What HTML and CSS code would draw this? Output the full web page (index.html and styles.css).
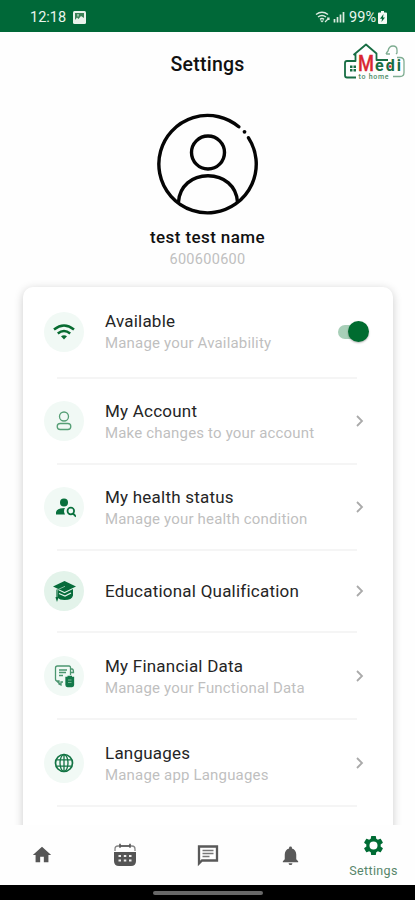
FILE: index.html
```html
<!DOCTYPE html>
<html lang="en">
<head>
<meta charset="utf-8">
<title>Settings</title>
<link rel="stylesheet" href="styles.css">
</head>
<body>
<div class="screen">
  <div class="status">
    <span class="time">12:18</span>
    <svg class="pic" width="13" height="13" viewBox="0 0 13 13"><rect width="13" height="13" rx="1.5" fill="#e9f3ec"/><path d="M2 2h9v5L8 5 5.500 8 4 6.500 2 9z" fill="#3c8258"/><path d="M5 3v2.500" stroke="#e9f3ec"/></svg>
    <svg class="signal" width="31" height="14" viewBox="0 0 31 14" fill="none" stroke="#dcebe0" stroke-width="1.500"><path d="M1 4.500Q7 0 13 4.500M3 7q4-3 8 0M5 9.300q2-1.500 4 0"/><path d="M7 12.500l-2-2h4z" fill="#dcebe0" stroke="none"/><path d="M10 12l4-4M12 8h2v2" stroke-width="1.200"/><path d="M19.500 12.500V9M22.500 12.500V7M25.500 12.500V4.500M28.500 12.500V2" stroke-width="1.700"/></svg>
    <span class="percent">99%</span>
    <svg width="9" height="13" viewBox="0 0 9 13"><path d="M3 0h3v1.500h2q1 0 1 1V12q0 1-1 1H1q-1 0-1-1V2.500q0-1 1-1h2z" fill="#f4faf5"/><path d="M5.500 3L2 7.700h2L3.500 11 7 6.400H5z" fill="#006838"/></svg>
  </div>
  <header class="header">
    <h1>Settings</h1>
    <svg class="logo" width="62" height="38" viewBox="0 0 62 38">
      <g fill="none" stroke="#176d43" stroke-width="1.800" stroke-linejoin="round">
        <path d="M12 34.500H3q-2 0-2-2V20q0-2 2-2h8.500v-8M9.500 12L22 1.500 32.500 10.500v6.500H44"/>
        <path d="M42 11q1-2 2-3 1-5 5-5 4 0 4 4v3l-1 1M42 11h4M53 14.500h3q4 0 4 4v11q0 4-4 4h-7" stroke="#7eac91" stroke-width="1.300"/>
      </g>
      <path d="M6 22.500h2.500V25H6zM9.500 22.500H12V25H9.500zM6 26h2.500v2.500H6zM9.500 26H12v2.500H9.500z" fill="#176d43"/>
      <text x="14" y="28" class="logo-m" textLength="16" lengthAdjust="spacingAndGlyphs">M</text>
      <text x="31" y="28" class="logo-edi" textLength="26" lengthAdjust="spacing">edi</text>
      <text x="14.500" y="35.500" class="logo-sub" textLength="30" lengthAdjust="spacing">to home</text>
      <circle cx="46" cy="23.500" r="1.300" fill="#d92632"/>
    </svg>
  </header>
  <section class="profile">
    <svg width="102" height="102" viewBox="0 0 102 102" fill="none" stroke="#050505" stroke-width="3.400"><path d="M81.800 13.800A48.700 48.700 0 1 0 91.500 24.800" stroke-linecap="round"/><circle cx="51" cy="39.500" r="16.500"/><path d="M21.500 89C22.500 73 35 62.700 51 62.700S79.500 73 80.500 89"/><circle cx="87.500" cy="18.800" r="1.900" fill="#050505" stroke="none"/></svg>
    <div class="name">test test name</div>
    <div class="phone">600600600</div>
  </section>
  <main class="content">
    <div class="card">
      <div class="row first">
        <span class="icon"><svg width="24" height="24" viewBox="0 0 24 24" fill="none" stroke="#086b31" stroke-width="2.500"><path d="M2 9.500Q12 1.500 22 9.500M5.800 13.500Q12 8.500 18.200 13.500"/><path d="M12 19.500l-3-3.300q3-2 6 0z" fill="#086b31" stroke="none"/></svg></span>
        <div class="text"><div class="title">Available</div><div class="sub">Manage your Availability</div></div>
        <span class="switch"></span>
      </div>
      <div class="row">
        <span class="icon"><svg width="24" height="24" viewBox="0 0 24 24" fill="none" stroke="#569f76" stroke-width="1.300"><circle cx="12" cy="7.500" r="4.500"/><rect x="5.200" y="14.500" width="13.600" height="6" rx="3"/></svg></span>
        <div class="text"><div class="title">My Account</div><div class="sub">Make changes to your account</div></div>
        <svg class="chevron" width="8" height="12" viewBox="0 0 8 12"><path d="M1 1l5 5-5 5"/></svg>
      </div>
      <div class="row">
        <span class="icon"><svg width="24" height="24" viewBox="0 0 24 24" fill="#08703d"><circle cx="12" cy="7.500" r="4"/><path d="M4 19.500V17q1-4 9-4-2 3 0 6.500z"/><circle cx="18.800" cy="16" r="3.300" fill="none" stroke="#08703d" stroke-width="1.700"/><path d="M21 18.500l3 3" stroke="#08703d" stroke-width="1.800"/></svg></span>
        <div class="text"><div class="title">My health status</div><div class="sub">Manage your health condition</div></div>
        <svg class="chevron" width="8" height="12" viewBox="0 0 8 12"><path d="M1 1l5 5-5 5"/></svg>
      </div>
      <div class="row short">
        <span class="icon strong"><svg width="24" height="24" viewBox="0 0 24 24" fill="#076c3b"><path d="M1 7.500L12.500 2 24 7.500 12.500 13z"/><path d="M6 11l6.500 3.200L21 10v6.500q-1 4.500-8.500 4.500-5 0-7-2.500z"/><path d="M7 14.500l6 2.500 6-3" fill="none" stroke="#e3f3ea" stroke-width="1.300"/><path d="M12 7.500l-7 3.500v8M4 18l1 3 1-3" fill="none" stroke="#076c3b" stroke-width="1.200"/><path d="M13 7.300L5 11" stroke="#e3f3ea" stroke-width=".6"/></svg></span>
        <div class="text"><div class="title">Educational Qualification</div></div>
        <svg class="chevron" width="8" height="12" viewBox="0 0 8 12"><path d="M1 1l5 5-5 5"/></svg>
      </div>
      <div class="row tall">
        <span class="icon"><svg width="24" height="24" viewBox="0 0 24 24" fill="none" stroke="#4c9670" stroke-width="1.300"><path d="M18.500 11V3.500q0-1.500-1.500-1.500H5.500Q3.500 2 3.500 4v11q0 2 2 2H7v3l2 1v-3h2M3.500 16l5 4.500M18.500 5h1.500q1.500 0 1.500 3.500h-3M7 6h8M7 8.500h7M7 11.500h4"/><path d="M14 13.500h7.500V21q0 1.500-1.500 1.500h-4.500Q14 22.500 14 21zM15.500 12.500h4.500" fill="#14794a" stroke="#14794a"/><path d="M16 16h3.500M16 18.500h3.500" stroke="#8fc0a5" stroke-width=".8"/></svg></span>
        <div class="text"><div class="title">My Financial Data</div><div class="sub">Manage your Functional Data</div></div>
        <svg class="chevron" width="8" height="12" viewBox="0 0 8 12"><path d="M1 1l5 5-5 5"/></svg>
      </div>
      <div class="row tall">
        <span class="icon"><svg width="24" height="24" viewBox="0 0 24 24" fill="none" stroke="#137444" stroke-width="1.300"><circle cx="12" cy="12" r="8.500" stroke-width="1.700"/><ellipse cx="12" cy="12" rx="4" ry="8.500"/><path d="M12 3.500v17M4.500 8.800h15M4.500 15.200h15"/></svg></span>
        <div class="text"><div class="title">Languages</div><div class="sub">Manage app Languages</div></div>
        <svg class="chevron" width="8" height="12" viewBox="0 0 8 12"><path d="M1 1l5 5-5 5"/></svg>
      </div>
    </div>
  </main>
  <nav class="nav">
    <span class="tab"><svg width="22" height="22" viewBox="0 0 24 24" fill="#565656"><path d="M10 20v-6h4v6h5v-8h3L12 3 2 12h3v8z"/></svg></span>
    <span class="tab"><svg width="24" height="24" viewBox="0 0 24 24"><path d="M2 8V6q0-3 3-3h14q3 0 3 3v2" fill="none" stroke="#858585" stroke-width="1.300"/><path d="M7 .8v4M17 .8v4M7 3h10" stroke="#555" stroke-width="1.600"/><path d="M1 9h22v9q0 5-5 5H6q-5 0-5-5z" fill="#555"/><path d="M5.500 12h2.500v2H5.500zM10.800 12h2.500v2h-2.500zM16 12h2.500v2H16zM5.500 16.500h2.500v2H5.500zM10.800 16.500h2.500v2h-2.500zM16 16.500h2.500v2H16z" fill="#eee"/></svg></span>
    <span class="tab"><svg width="24" height="24" viewBox="0 0 24 24"><path d="M3 3.500h18v14H6l-3 3z" fill="none" stroke="#595959" stroke-width="2.300"/><path d="M6.500 7.500h11M6.500 10.500h11M6.500 13.500h7" stroke="#777" stroke-width="1.400"/></svg></span>
    <span class="tab"><svg width="23" height="23" viewBox="0 0 24 24" fill="#595959"><path d="M12 22q2 0 2-2h-4q0 2 2 2zM18 16v-5c0-3.070-1.640-5.640-4.500-6.320V4a1.500 1.500 0 0 0-3 0v.68C7.630 5.360 6 7.920 6 11v5l-2 2v1h16v-1z"/></svg></span>
    <span class="tab active"><svg width="23" height="23" viewBox="0 0 24 24" fill="#006b34"><path d="M19.430 12.980c.04-.32.07-.64.07-.98s-.03-.66-.07-.98l2.110-1.650a.5.5 0 0 0 .12-.64l-2-3.460a.5.5 0 0 0-.61-.22l-2.490 1a7.300 7.300 0 0 0-1.690-.98l-.38-2.650A.49.490 0 0 0 14 2h-4a.49.490 0 0 0-.49.420l-.38 2.650c-.61.25-1.170.59-1.690.98l-2.490-1a.49.490 0 0 0-.61.220l-2 3.460a.49.490 0 0 0 .12.640l2.110 1.650c-.04.32-.07.65-.07.980s.03.660.070.980l-2.110 1.650a.5.500 0 0 0-.12.640l2 3.460c.12.220.39.300.61.220l2.490-1c.52.400 1.080.730 1.690.980l.38 2.650c.03.240.24.420.49.420h4c.25 0 .46-.18.490-.42l.38-2.650c.61-.25 1.170-.59 1.690-.98l2.490 1c.23.090.49 0 .61-.22l2-3.460a.5.500 0 0 0-.12-.64zM12 16.200a4.200 4.200 0 1 1 0-8.400 4.200 4.200 0 0 1 0 8.400z"/></svg><span>Settings</span></span>
  </nav>
  <div class="gesture"><span></span></div>
</div>
</body>
</html>
```
FILE: styles.css
```css
* { box-sizing: border-box; }
body { margin: 0; background: #fff; font-family: Roboto, sans-serif; }
.screen { width: 415px; height: 900px; display: flex; flex-direction: column; overflow: hidden; background: #fefefe; }
.status { height: 32px; flex: none; background: #006838; color: #eaf5ed; display: flex; align-items: center; padding: 2px 28px 0 30px; font-size: 14.500px; }
.time { width: 43px; }
.signal { margin-left: auto; margin-right: 3px; }
.percent { margin-right: 2px; }
.header { height: 64px; flex: none; display: grid; grid-template-columns: 1fr auto 1fr; align-items: center; padding: 0 9px; }
.header h1 { grid-column: 2; margin: 0; font-size: 19.500px; font-weight: 500; letter-spacing: .25px; color: #111; }
.logo { justify-self: end; margin-top: -4px; }
.logo-m { font: 500 22px Roboto, sans-serif; fill: #d92632; stroke: #d92632; stroke-width: .3px; }
.logo-edi { font: 700 16px Roboto, sans-serif; fill: #176d43; }
.logo-sub { font: 500 7px Roboto, sans-serif; fill: #4c8b68; }
.profile { height: 191px; flex: none; padding-top: 17px; display: flex; flex-direction: column; align-items: center; }
.profile svg { flex: none; }
.name { margin-top: 11px; line-height: 22px; font-size: 17px; font-weight: 500; letter-spacing: .4px; color: #111; }
.phone { line-height: 24px; font-size: 14.500px; letter-spacing: .3px; color: #c0c0c0; }
.content { flex: 1; min-height: 0; overflow: hidden; padding: 10px 22px 0 23px; margin-top: -10px; }
.card { height: 580px; background: #fff; border-radius: 10px; box-shadow: 0 2px 10px rgba(0,0,0,.2); padding: 0 36px 0 34px; }
.row { height: 86px; display: flex; align-items: center; border-bottom: 2px solid #f5f5f5; }
.first { height: 91.500px; }
.short { height: 82.500px; padding-top: 1px; }
.tall { height: 87px; }
.icon { width: 40px; height: 40px; flex: none; border-radius: 50%; background: #f1f9f5; display: flex; align-items: center; justify-content: center; margin-left: -13px; margin-right: 21px; }
.icon.strong { background: #e3f3ea; }
.text { flex: 1; white-space: nowrap; line-height: 22px; padding-top: 2px; }
.first .text, .short .text { padding-top: 0; }
.tall .text { padding-top: 3px; }
.title { font-size: 17px; letter-spacing: .22px; color: #252525; }
.sub { font-size: 15px; letter-spacing: .18px; color: #bfbfbf; }
.chevron { flex: none; margin-right: -7px; fill: none; stroke: #aaa; stroke-width: 1.800; }
.switch { width: 31px; height: 21px; flex: none; margin-right: -12px; display: flex; justify-content: flex-end; align-items: center; }
.switch::before { content: ""; width: 28px; height: 14px; margin-right: -18px; border-radius: 7px; background: #a8cfb8; }
.switch::after { content: ""; flex: none; width: 21px; height: 21px; border-radius: 50%; background: #006c30; box-shadow: 0 1px 2px rgba(0,0,0,.3); }
.nav { height: 60px; flex: none; display: grid; grid-template-columns: repeat(5, 1fr); background: #fefefe; }
.tab { display: flex; flex-direction: column; align-items: center; justify-content: center; }
.active { justify-content: flex-start; padding-top: 9px; color: #56866a; font-size: 12.500px; line-height: 16px; letter-spacing: .35px; gap: 6px; }
.gesture { height: 15px; flex: none; background: #000; display: flex; justify-content: center; padding-top: 6px; }
.gesture span { width: 110px; height: 4px; border-radius: 2px; background: #686868; }
```
